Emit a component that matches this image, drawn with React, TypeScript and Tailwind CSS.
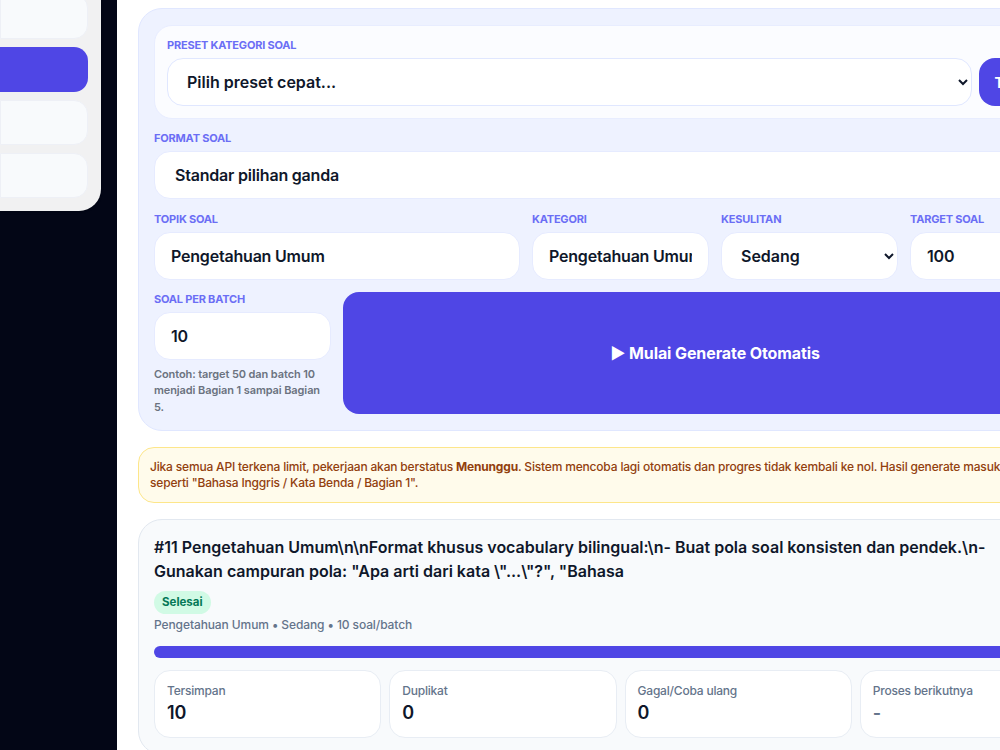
import React from "react";

const font = { fontFamily: "Inter, 'Noto Sans', sans-serif" };

const stats = [
  { label: "Tersimpan", value: "10", muted: false },
  { label: "Duplikat", value: "0", muted: false },
  { label: "Gagal/Coba ulang", value: "0", muted: false },
  { label: "Proses berikutnya", value: "-", muted: true },
];

function Label({ children }: { children: React.ReactNode }) {
  return (
    <label className="block text-[11px] leading-[14px] font-bold uppercase text-[#6b6ef5] tracking-[-0.2px] mb-[6px]">
      {children}
    </label>
  );
}

function Field({ value, className = "" }: { value: string; className?: string }) {
  return (
    <input
      readOnly
      value={value}
      className={`w-full h-[48px] px-4 rounded-[16px] bg-white border border-[#e6ebff] text-[16px] tracking-[-0.2px] font-semibold text-[#0f172a] outline-none ${className}`}
    />
  );
}

function Sidebar() {
  return (
    <div className="w-[117px] shrink-0 bg-[#030616] h-full">
      <div className="w-[101px] h-[211px] bg-[#f1f1f2] rounded-br-[22px] shadow-sm pb-[13px] pr-[13px] flex flex-col justify-end gap-[8px] overflow-hidden">
        <div className="h-[45px] shrink-0 bg-[#f8fafc] border border-[#eef0f6] rounded-r-[14px]" />
        <div className="h-[45px] shrink-0 bg-[#4f46e5] rounded-r-[14px]" />
        <div className="h-[45px] shrink-0 bg-[#f8fafc] border border-[#eef0f6] rounded-r-[14px]" />
        <div className="h-[45px] shrink-0 bg-[#f8fafc] border border-[#eef0f6] rounded-r-[14px]" />
      </div>
    </div>
  );
}

function GeneratorForm() {
  return (
    <div className="rounded-[24px] bg-[#eef2ff] border border-[#e0e7ff] px-[15px] pt-[16px] pb-[15px]">
      <div className="rounded-[18px] bg-[#fbfcff] border border-[#e8edff] px-[12px] pt-[12px] pb-[12px] h-[94px]">
        <Label>Preset kategori soal</Label>
        <div className="flex gap-[7px]">
          <select
            defaultValue="x"
            className="flex-1 h-[48px] pl-[15px] pr-2 rounded-[16px] bg-white border border-[#e0e7ff] text-[16px] font-semibold text-[#0f172a] outline-none"
          >
            <option value="x">Pilih preset cepat...</option>
          </select>
          <button className="w-[95px] h-[48px] rounded-[16px] bg-[#4f46e5] text-white text-[14px] font-bold">
            Terapkan
          </button>
        </div>
      </div>

      <div className="mt-[12px]">
        <Label>Format soal</Label>
        <Field value="Standar pilihan ganda" className="px-5 h-[47.5px]" />
      </div>

      <div className="grid grid-cols-5 gap-x-[12px] mt-[13px]">
        <div className="col-span-2">
          <Label>Topik soal</Label>
          <Field value="Pengetahuan Umum" />
        </div>
        <div>
          <Label>Kategori</Label>
          <Field value="Pengetahuan Umum" />
        </div>
        <div>
          <Label>Kesulitan</Label>
          <select
            defaultValue="Sedang"
            className="w-full h-[48px] pl-[15px] pr-2 rounded-[16px] bg-white border border-[#e6ebff] text-[16px] font-semibold text-[#0f172a] outline-none"
          >
            <option>Sedang</option>
          </select>
        </div>
        <div>
          <Label>Target soal</Label>
          <Field value="100" />
        </div>
      </div>

      <div className="grid grid-cols-5 gap-x-[12px] mt-[12px]">
        <div>
          <Label>Soal per batch</Label>
          <Field value="10" />
          <p className="mt-[5.5px] text-[11px] leading-[16.5px] font-semibold tracking-[-0.1px] text-[#6b7280]">
            Contoh: target 50 dan batch 10 menjadi Bagian 1 sampai Bagian 5.
          </p>
        </div>
        <button className="col-span-4 h-[122px] rounded-[16px] bg-[#4f46e5] text-white text-[16px] tracking-[-0.1px] font-bold">
          ▶ Mulai Generate Otomatis
        </button>
      </div>
    </div>
  );
}

function JobCard() {
  return (
    <div className="mt-[16px] rounded-[24px] bg-[#f8fafc] border border-[#e2e8f0] px-[15px] pt-[15px] pb-[16px]">
      <h3 className="text-[16px] leading-[24px] font-semibold text-[#0f172a]">
        #11 Pengetahuan Umum\n\nFormat khusus vocabulary bilingual:\n- Buat pola soal konsisten dan pendek.\n-
        <br />
        Gunakan campuran pola: "Apa arti dari kata \"...\"?", "Bahasa
      </h3>
      <span className="inline-block mt-[8px] px-[8px] h-[23px] leading-[23px] rounded-full bg-[#d1fae5] text-[#047857] text-[11.5px] font-bold">
        Selesai
      </span>
      <p className="mt-[2px] text-[12px] leading-[18px] tracking-[-0.1px] text-[#64748b] font-medium">
        Pengetahuan Umum • Sedang • 10 soal/batch
      </p>
      <div className="mt-[12px] h-[12px] rounded-full bg-[#4f46e5]" />
      <div className="grid grid-cols-4 gap-[8px] mt-[12px]">
        {stats.map((s) => (
          <div key={s.label} className="h-[68px] rounded-[16px] bg-white border border-[#e8edf4] px-[12px] pt-[12px]">
            <div className="text-[12px] leading-[16px] font-medium tracking-[-0.2px] text-[#64748b]">{s.label}</div>
            <div className={`text-[18px] leading-[28px] font-semibold ${s.muted ? "text-[#64748b]" : "text-[#0f172a]"}`}>
              {s.value}
            </div>
          </div>
        ))}
      </div>
    </div>
  );
}

export default function App() {
  return (
    <div style={font} className="w-[1000px] h-[750px] overflow-hidden flex bg-white">
      <Sidebar />
      <main className="flex-1 min-w-0 bg-white pl-[21px] pt-[8px]">
        <div className="w-[965px]">
          <GeneratorForm />
          <div className="mt-[16px] rounded-[16px] bg-[#fffbeb] border border-[#fde68a] px-[11px] py-[11px] text-[12px] leading-[16px] font-medium tracking-[-0.18px] text-[#92400e]">
            Jika semua API terkena limit, pekerjaan akan berstatus <b className="font-bold">Menunggu</b>. Sistem mencoba lagi otomatis dan progres tidak kembali ke nol. Hasil generate masuk ke bank soal seperti "Bahasa Inggris / Kata Benda / Bagian 1".
          </div>
          <JobCard />
        </div>
      </main>
    </div>
  );
}
